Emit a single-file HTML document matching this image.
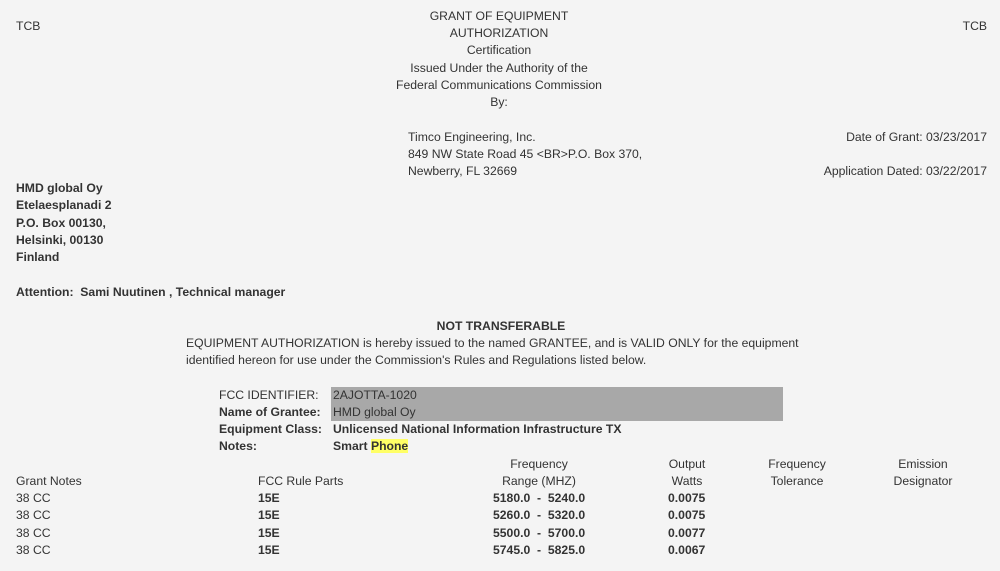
<!DOCTYPE html>
<html><head><meta charset="utf-8"><style>
html,body{margin:0;padding:0;width:1000px;height:571px;background:#f4f4f4;overflow:hidden}
body{font-family:"Liberation Sans",Arial,sans-serif;font-size:12.2px;color:#333;position:relative}
.t{position:absolute;line-height:16px;white-space:nowrap}
.c{transform:translateX(-50%)}
.r{text-align:right}
b{font-weight:bold}
</style></head><body>
<div class="t" style="left:16px;top:18px">TCB</div>
<div class="t r" style="right:13px;top:18px">TCB</div>
<div class="t c" style="left:499px;top:8px">GRANT OF EQUIPMENT</div>
<div class="t c" style="left:499px;top:25px">AUTHORIZATION</div>
<div class="t c" style="left:499px;top:42px">Certification</div>
<div class="t c" style="left:499px;top:60px">Issued Under the Authority of the</div>
<div class="t c" style="left:499px;top:77px">Federal Communications Commission</div>
<div class="t c" style="left:499px;top:94px">By:</div>
<div class="t" style="left:408px;top:129px">Timco Engineering, Inc.</div>
<div class="t" style="left:408px;top:146px">849 NW State Road 45 &lt;BR&gt;P.O. Box 370,</div>
<div class="t" style="left:408px;top:163px">Newberry, FL 32669</div>
<div class="t r" style="right:13px;top:129px">Date of Grant: 03/23/2017</div>
<div class="t r" style="right:13px;top:163px">Application Dated: 03/22/2017</div>
<div class="t" style="left:16px;top:180px"><b>HMD global Oy</b></div>
<div class="t" style="left:16px;top:197px"><b>Etelaesplanadi 2</b></div>
<div class="t" style="left:16px;top:215px"><b>P.O. Box 00130,</b></div>
<div class="t" style="left:16px;top:232px"><b>Helsinki, 00130</b></div>
<div class="t" style="left:16px;top:249px"><b>Finland</b></div>
<div class="t" style="left:16px;top:284px"><b>Attention:&nbsp; Sami Nuutinen , Technical manager</b></div>
<div class="t c" style="left:501px;top:318px"><b>NOT TRANSFERABLE</b></div>
<div class="t" style="left:186px;top:335px">EQUIPMENT AUTHORIZATION is hereby issued to the named GRANTEE, and is VALID ONLY for the equipment</div>
<div class="t" style="left:186px;top:352px">identified hereon for use under the Commission's Rules and Regulations listed below.</div>
<div style="position:absolute;left:331px;top:387px;width:452px;height:34px;background:#a8a8a8"></div>
<div class="t" style="left:219px;top:387px">FCC IDENTIFIER:</div>
<div class="t" style="left:333px;top:387px">2AJOTTA-1020</div>
<div class="t" style="left:219px;top:404px"><b>Name of Grantee:</b></div>
<div class="t" style="left:333px;top:404px">HMD global Oy</div>
<div class="t" style="left:219px;top:421px"><b>Equipment Class:</b></div>
<div class="t" style="left:333px;top:421px"><b>Unlicensed National Information Infrastructure TX</b></div>
<div class="t" style="left:219px;top:438px"><b>Notes:</b></div>
<div class="t" style="left:333px;top:438px"><b>Smart <span style="background:#ffff66">Phone</span></b></div>
<div class="t c" style="left:539px;top:456px">Frequency</div>
<div class="t c" style="left:687px;top:456px">Output</div>
<div class="t c" style="left:797px;top:456px">Frequency</div>
<div class="t c" style="left:923px;top:456px">Emission</div>
<div class="t" style="left:16px;top:473px">Grant Notes</div>
<div class="t" style="left:258px;top:473px">FCC Rule Parts</div>
<div class="t c" style="left:539px;top:473px">Range (MHZ)</div>
<div class="t c" style="left:687px;top:473px">Watts</div>
<div class="t c" style="left:797px;top:473px">Tolerance</div>
<div class="t c" style="left:923px;top:473px">Designator</div>
<div class="t" style="left:16px;top:490px">38 CC</div><div class="t" style="left:258px;top:490px"><b>15E</b></div><div class="t" style="left:493px;top:490px"><b>5180.0&nbsp; -&nbsp; 5240.0</b></div><div class="t" style="left:668px;top:490px"><b>0.0075</b></div>
<div class="t" style="left:16px;top:507px">38 CC</div><div class="t" style="left:258px;top:507px"><b>15E</b></div><div class="t" style="left:493px;top:507px"><b>5260.0&nbsp; -&nbsp; 5320.0</b></div><div class="t" style="left:668px;top:507px"><b>0.0075</b></div>
<div class="t" style="left:16px;top:525px">38 CC</div><div class="t" style="left:258px;top:525px"><b>15E</b></div><div class="t" style="left:493px;top:525px"><b>5500.0&nbsp; -&nbsp; 5700.0</b></div><div class="t" style="left:668px;top:525px"><b>0.0077</b></div>
<div class="t" style="left:16px;top:542px">38 CC</div><div class="t" style="left:258px;top:542px"><b>15E</b></div><div class="t" style="left:493px;top:542px"><b>5745.0&nbsp; -&nbsp; 5825.0</b></div><div class="t" style="left:668px;top:542px"><b>0.0067</b></div>
</body></html>
